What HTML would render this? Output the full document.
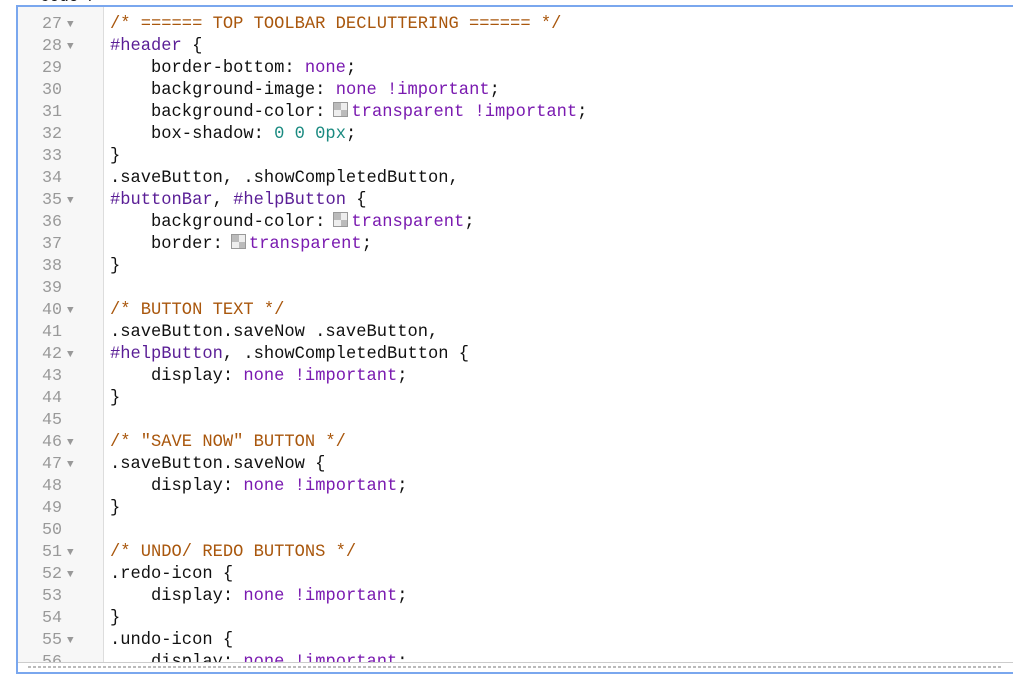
<!DOCTYPE html>
<html><head><style>
body{margin:0;background:#fff;width:1014px;height:681px;overflow:hidden;position:relative;font-family:"Liberation Mono",monospace;}
.frame{position:absolute;left:16px;top:5px;width:995px;height:665px;border:2px solid #7aa7ee;border-right:none;background:#fff;overflow:hidden;}
.gut{position:absolute;left:0;top:0;width:85px;height:660px;background:#f7f7f7;border-right:1px solid #ddd;}
.lines{position:absolute;left:0;top:7px;width:100%;font-size:17.1px;line-height:22px;}
.l{height:22px;white-space:pre;position:relative;}
.n{position:absolute;left:0;width:44px;text-align:right;color:#999;font-size:16.7px;}
.a{position:absolute;left:49px;color:#999;font-size:11px;}
.c{position:absolute;left:92px;color:#111;}
.cm{color:#a9570d}.s{color:#5a1e96}.k{color:#7a1ab0}.num{color:#1a8a80}
.sw{display:inline-block;width:13px;height:13px;border:1px solid #999;margin:0 3px 0 8px;vertical-align:-1px;background:linear-gradient(90deg,#bbb 50%,#eee 50%) 0 0/14px 7px no-repeat,linear-gradient(90deg,#eee 50%,#bbb 50%) 0 7px/14px 7px no-repeat;}
.rz{position:absolute;left:0;top:655px;width:100%;height:10px;border-top:1px solid #ccc;background:#fff;}
.rz div{margin:3px 10px 0;height:2px;background:repeating-linear-gradient(90deg,#bbb 0 3px,transparent 3px 5px);}
.top{position:absolute;left:40px;top:-12px;font-size:16px;color:#111;}
</style></head><body>
<div class="top">Code /</div>
<div class="frame">
<div class="gut"></div>
<div class="lines">
<div class="l"><span class="n">27</span><span class="a">▼</span><span class="c cm">/* ====== TOP TOOLBAR DECLUTTERING ====== */</span></div>
<div class="l"><span class="n">28</span><span class="a">▼</span><span class="c"><span class="s">#header</span> {</span></div>
<div class="l"><span class="n">29</span><span class="c">    border-bottom: <span class="k">none</span>;</span></div>
<div class="l"><span class="n">30</span><span class="c">    background-image: <span class="k">none</span> <span class="k">!important</span>;</span></div>
<div class="l"><span class="n">31</span><span class="c">    background-color:<span class="sw"></span><span class="k">transparent</span> <span class="k">!important</span>;</span></div>
<div class="l"><span class="n">32</span><span class="c">    box-shadow: <span class="num">0 0 0px</span>;</span></div>
<div class="l"><span class="n">33</span><span class="c">}</span></div>
<div class="l"><span class="n">34</span><span class="c">.saveButton, .showCompletedButton,</span></div>
<div class="l"><span class="n">35</span><span class="a">▼</span><span class="c"><span class="s">#buttonBar</span>, <span class="s">#helpButton</span> {</span></div>
<div class="l"><span class="n">36</span><span class="c">    background-color:<span class="sw"></span><span class="k">transparent</span>;</span></div>
<div class="l"><span class="n">37</span><span class="c">    border:<span class="sw"></span><span class="k">transparent</span>;</span></div>
<div class="l"><span class="n">38</span><span class="c">}</span></div>
<div class="l"><span class="n">39</span></div>
<div class="l"><span class="n">40</span><span class="a">▼</span><span class="c cm">/* BUTTON TEXT */</span></div>
<div class="l"><span class="n">41</span><span class="c">.saveButton.saveNow .saveButton,</span></div>
<div class="l"><span class="n">42</span><span class="a">▼</span><span class="c"><span class="s">#helpButton</span>, .showCompletedButton {</span></div>
<div class="l"><span class="n">43</span><span class="c">    display: <span class="k">none</span> <span class="k">!important</span>;</span></div>
<div class="l"><span class="n">44</span><span class="c">}</span></div>
<div class="l"><span class="n">45</span></div>
<div class="l"><span class="n">46</span><span class="a">▼</span><span class="c cm">/* "SAVE NOW" BUTTON */</span></div>
<div class="l"><span class="n">47</span><span class="a">▼</span><span class="c">.saveButton.saveNow {</span></div>
<div class="l"><span class="n">48</span><span class="c">    display: <span class="k">none</span> <span class="k">!important</span>;</span></div>
<div class="l"><span class="n">49</span><span class="c">}</span></div>
<div class="l"><span class="n">50</span></div>
<div class="l"><span class="n">51</span><span class="a">▼</span><span class="c cm">/* UNDO/ REDO BUTTONS */</span></div>
<div class="l"><span class="n">52</span><span class="a">▼</span><span class="c">.redo-icon {</span></div>
<div class="l"><span class="n">53</span><span class="c">    display: <span class="k">none</span> <span class="k">!important</span>;</span></div>
<div class="l"><span class="n">54</span><span class="c">}</span></div>
<div class="l"><span class="n">55</span><span class="a">▼</span><span class="c">.undo-icon {</span></div>
<div class="l"><span class="n">56</span><span class="c">    display: <span class="k">none</span> <span class="k">!important</span>;</span></div>
</div>
<div class="rz"><div></div></div>
</div>
</body></html>
